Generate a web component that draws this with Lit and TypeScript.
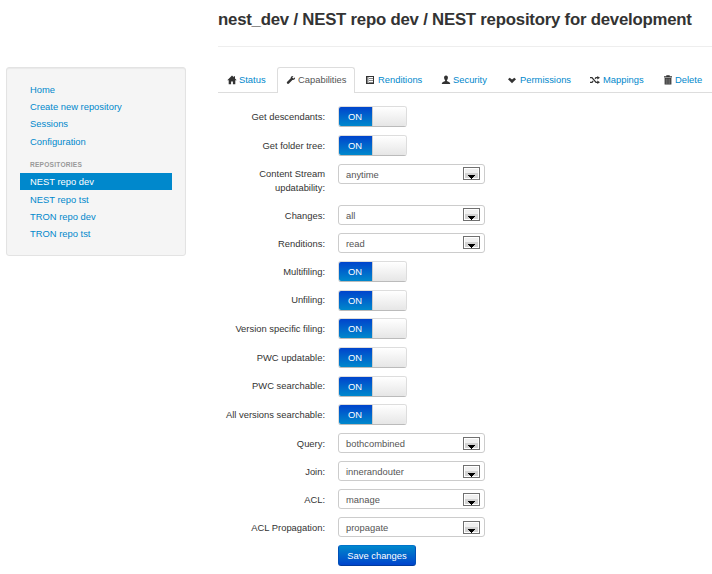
import { LitElement, html, css, svg } from "lit";
import { customElement } from "lit/decorators.js";
import { classMap } from "lit/directives/class-map.js";

const icons: Record<string, unknown> = {
  home: svg`<path d="M5 .6 .3 5.200h1.400v4h2.400V6.400h1.800v2.800h2.400v-4h1.400L8 3.500V1.200H6.800v1.100z"/>`,
  wrench: svg`<path d="M9 2.300 7.700 3.500 6.700 3.100 6.300 2.200 7.500 1C6.200.6 4.600 1.400 4.700 3.300L1 7C.3 7.900 1.500 9.400 2.700 8.800l3.700-3.700C8.300 5.300 9.500 3.900 9 2.300z"/>`,
  list: svg`<path fill-rule="evenodd" d="M1 1h8v8H1zM2 2v6h6V2z"/><path d="M2 2h1.500v6H2zM4 3h4v1H4zm0 2h4v1H4zm0 2h4v1H4z" opacity=".6"/>`,
  user: svg`<path d="M5 .5C3.600.5 2.900 1.600 3.100 3c.1 1 .5 1.800 1 2.200v.9C2.800 6.600.9 7 .7 9h8.600c-.2-2-2.100-2.400-3.400-2.900v-.9c.5-.4.9-1.200 1-2.200C7.100 1.600 6.400.5 5 .5z"/>`,
  check: svg`<path d="M1 4.300 2.700 2.700 5 4.500 7.300 2.700 9 4.300 5 8.200z"/>`,
  random: svg`<path d="M0 2h2.300l4 4.700h1V5.500L10 7.300 7.300 9V8H5.700l-4-4.700H0zM0 6.700h1.700l1-1.200.9 1L2.300 8H0zM4.600 3.300 5.700 2h1.600V1L10 2.700 7.300 4.500V3.300h-1l-.9 1z"/>`,
  trash: svg`<path d="M3.300.3h3.400v1H9v1.300H1V1.300h2.300z"/><path d="M1.600 3h6.800v6.500H1.600z"/><path d="M3.200 3.500v5.500M5 3.500v5.500M6.800 3.500v5.500" stroke="#999" stroke-width=".7"/>`,
};

const tabs = [
  { icon: "home", text: "Status", kind: "status" },
  { icon: "wrench", text: "Capabilities", kind: "capabilities" },
  { icon: "list", text: "Renditions", kind: "renditions" },
  { icon: "user", text: "Security", kind: "security" },
  { icon: "check", text: "Permissions", kind: "permissions" },
  { icon: "random", text: "Mappings", kind: "mappings" },
  { icon: "trash", text: "Delete", kind: "delete" },
];

const fields: { label: string; value?: string; tall?: boolean }[] = [
  { label: "Get descendants:" },
  { label: "Get folder tree:" },
  { label: "Content Stream updatability:", value: "anytime", tall: true },
  { label: "Changes:", value: "all" },
  { label: "Renditions:", value: "read" },
  { label: "Multifiling:" },
  { label: "Unfiling:" },
  { label: "Version specific filing:" },
  { label: "PWC updatable:" },
  { label: "PWC searchable:" },
  { label: "All versions searchable:" },
  { label: "Query:", value: "bothcombined" },
  { label: "Join:", value: "innerandouter" },
  { label: "ACL:", value: "manage" },
  { label: "ACL Propagation:", value: "propagate" },
];

@customElement("repo-sidebar")
class RepoSidebar extends LitElement {
  static styles = css`
    :host { display: block; box-sizing: border-box; width: 180px; height: 189px; padding: 13px; border: 1px solid #e3e3e3; border-radius: 3px; background: #f5f5f5; box-shadow: inset 0 1px 1px rgba(0,0,0,.05); }
    .link, .header { height: 17.200px; line-height: 17px; padding-left: 10px; white-space: nowrap; color: #08c; }
    .header { font-size: 6.600px; font-weight: bold; color: #999; height: 23.200px; line-height: 29px; letter-spacing: .23px; }
    .active { background: #08c; color: #fff; }
    .active ~ .link { position: relative; top: .4px; }
  `;
  render() {
    return html`
      ${["Home", "Create new repository", "Sessions", "Configuration"].map((t) => html`<div class="link">${t}</div>`)}
      <div class="header">REPOSITORIES</div>
      ${["NEST repo dev", "NEST repo tst", "TRON repo dev", "TRON repo tst"].map(
        (t, i) => html`<div class=${classMap({ link: true, active: i === 0 })}>${t}</div>`
      )}`;
  }
}

@customElement("capability-field")
class CapabilityField extends LitElement {
  static properties = { label: {}, value: {} };
  declare label: string;
  declare value?: string;
  static styles = css`
    :host { display: grid; grid-template-columns: 107px 147px; column-gap: 13px; align-items: start; }
    .label { text-align: right; line-height: 14px; padding-top: 3.700px; color: #333; }
    .switch { display: flex; box-sizing: border-box; width: 69px; height: 21px; border: 1px solid #ccc; border-color: #ddd #ddd #bbb; border-radius: 3px; overflow: hidden; }
    .on { width: 33px; line-height: 19px; text-align: center; text-indent: -1px; color: #fff; background: linear-gradient(#04c, #08c); }
    .knob { flex: 1; border-left: 1px solid #ccc; background: linear-gradient(#fff, #e6e6e6); }
    .select { display: flex; justify-content: space-between; box-sizing: border-box; height: 20px; padding: 0 4px 0 7px; border: 1px solid #ccc; border-radius: 3px; color: #555; background: #fff; line-height: 19px; }
    .arrow { display: block; width: 17px; height: 13px; margin-top: 2.450px; }
  `;
  render() {
    return html`
      <div class="label">${this.label}</div>
      ${this.value
        ? html`<div class="select"><span>${this.value}</span>
            <svg class="arrow" viewBox="0 0 17 13" shape-rendering="crispEdges">
              <rect x=".5" y=".5" width="16" height="12" fill="#fff" stroke="#707070" />
              <rect x="2" y="2" width="13" height="4" fill="#f0f0f0" />
              <rect x="2" y="6" width="13" height="5" fill="#d3d3d3" />
              <path d="M5 8h7v1h-1v1h-1v1H9v1H8v-1H7v-1H6V9H5z" fill="#000" />
            </svg></div>`
        : html`<div class="switch"><div class="on">ON</div><div class="knob"></div></div>`}`;
  }
}

@customElement("app-root")
class AppRoot extends LitElement {
  static styles = css`
    :host { display: flex; align-items: flex-start; box-sizing: border-box; height: 574px; overflow: hidden; padding-left: 6px; background: #fff; color: #333; font: 9.400px "Liberation Sans", Arial, sans-serif; }
    repo-sidebar { margin-top: 67px; flex: none; }
    .main { width: 494px; margin-left: 32px; flex: none; }
    .title { margin: 0; height: 46px; line-height: 40px; font-size: 16.800px; letter-spacing: -.225px; font-weight: bold; white-space: nowrap; border-bottom: 1px solid #eee; }
    .tabs { display: flex; box-sizing: border-box; height: 46px; padding-top: 20px; border-bottom: 1px solid #ddd; }
    .tab { display: flex; align-items: center; box-sizing: border-box; height: 26px; padding: 0 0 2px 9px; flex: none; white-space: nowrap; color: #08c; border: 1px solid transparent; border-bottom: 0; }
    .tab svg { width: 10px; height: 10px; margin: 1px 2px 0 0; fill: #333; flex: none; }
    .active { color: #555; background: #fff; border-color: #ddd; border-radius: 3px 3px 0 0; }
    .status { width: 59px; padding-left: 8px; }
    .capabilities { width: 78px; padding-left: 8px; }
    .renditions { width: 76px; }
    .tab.renditions svg { margin-right: 3px; }
    .security { width: 67px; }
    .permissions { width: 82px; padding-left: 8px; }
    .tab.permissions svg { margin-right: 3px; }
    .mappings { width: 74px; }
    .tab.mappings svg { margin-right: 3px; }
    .delete { width: 56px; padding-left: 8px; }
    .form { padding-top: 13.300px; }
    .row { height: 28.700px; }
    .choice { height: 28.050px; }
    .tall { height: 41.200px; }
    .save { box-sizing: border-box; width: 78px; height: 21px; margin: 0 0 0 120px; padding: 0; display: block; font: inherit; color: #fff; border: 1px solid #0055bb; border-color: #0074cc #0050b8 #003b9e; border-radius: 3px; background: linear-gradient(#08c, #04c); }
  `;
  render() {
    return html`
      <repo-sidebar></repo-sidebar>
      <div class="main">
        <h3 class="title">nest_dev / NEST repo dev / NEST repository for development</h3>
        <div class="tabs">
          ${tabs.map((t, i) => html`<div class="tab ${t.kind} ${i === 1 ? "active" : ""}">
            <svg viewBox="0 0 10 10">${icons[t.icon]}</svg><span>${t.text}</span></div>`)}
        </div>
        <div class="form">
          ${fields.map((f) => html`<capability-field
            class=${classMap({ row: true, choice: !!f.value, tall: !!f.tall })}
            .label=${f.label} .value=${f.value}></capability-field>`)}
          <button class="save">Save changes</button>
        </div>
      </div>`;
  }
}
